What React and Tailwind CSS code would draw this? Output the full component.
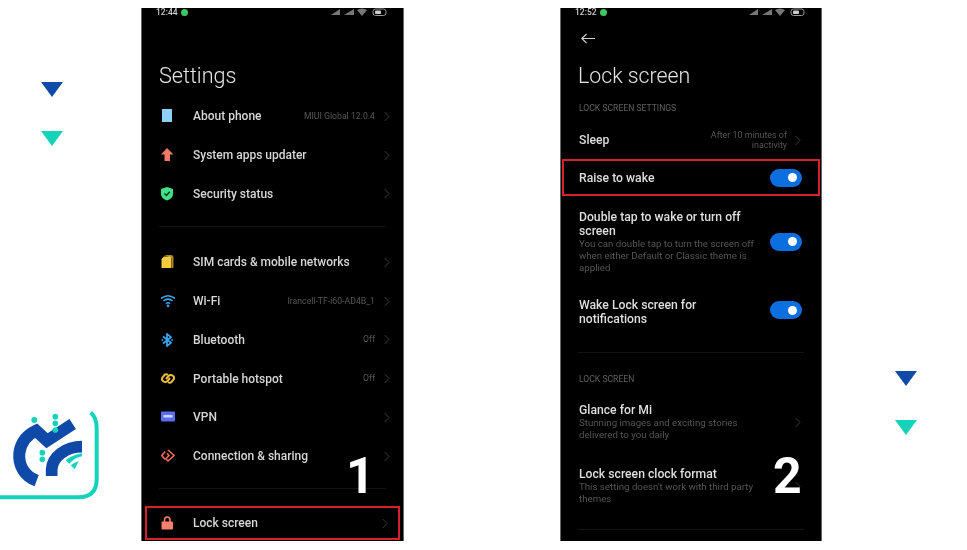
import React from "react";

const Tri = ({ color, className = "" }) => (
  <svg width="22" height="15" viewBox="0 0 22 15" className={`block ${className}`}>
    <polygon points="0,0 22,0 11,15" fill={color} />
  </svg>
);

const Chevron = ({ className = "" }) => (
  <svg width="6" height="11" viewBox="0 0 6 11" className={`shrink-0 ${className}`}>
    <path d="M0.7 1 L5 5.5 L0.7 10" fill="none" stroke="#3c3c3c" strokeWidth="1" />
  </svg>
);

const Logo = () => (
  <svg width="110" height="110" viewBox="0 0 330 330" className="block">
    <path d="M0 292 H235 Q290 292 290 238 V85 Q290 52 272 38" fill="none" stroke="#14d3bb" strokeWidth="12" />
    <path d="M110 242 C72 228 55 195 58 160 C62 125 85 102 108 92 L141 122 L218 72" fill="none" stroke="#0f4aa8" strokeWidth="36" />
    <path d="M155 228 L155 208 C157 170 198 140 246 140" fill="none" stroke="#0f4aa8" strokeWidth="35" />
    <g fill="#14d3bb">
      <circle cx="103" cy="60" r="9" />
      <circle cx="166" cy="50" r="8.5" />
      <circle cx="166" cy="70" r="8.5" />
      <circle cx="166" cy="90" r="8.5" />
      <circle cx="127" cy="158" r="8.5" />
      <circle cx="127" cy="178" r="8.5" />
      <path d="M197 181 C208 171 228 163 246 160 L246 169 C232 172 218 179 208 191 Z" />
      <path d="M212 196 C220 190 228 186 236 184 L224 208 Z" />
    </g>
  </svg>
);

const StatusBar = ({ time }) => (
  <div className="h-[9px] flex items-center justify-between pl-[14px] pr-[15px] text-[8.5px] leading-none font-medium text-[#cfcfcf]">
    <div className="flex items-center gap-[3px]">
      <span>{time}</span>
      <span className="w-[7px] h-[7px] rounded-full bg-[#43c463]" />
    </div>
    <svg width="58" height="9" viewBox="0 0 58 9">
      <polygon points="1,7 10,7 10,1" fill="#777" />
      <polygon points="14,7 24,7 24,1" fill="#777" />
      <path d="M27 2 Q32 -1 37 2 L32 8 Z" fill="#777" />
      <rect x="43" y="1" width="13" height="6.5" rx="2.5" fill="none" stroke="#999" strokeWidth="1" />
      <rect x="45" y="2.5" width="6" height="3.5" rx="1" fill="#ccc" />
    </svg>
  </div>
);

const icons = {
  phone: <rect x="1" y="0" width="10" height="13" fill="#8fd0f7" />,
  up: <path d="M6 0 L12.5 6.5 L9 6.5 L9 13 L3.5 13 L3.5 6.5 L0 6.5 Z" fill="#f57a66" />,
  shield: (
    <>
      <path d="M6 0 L12 2 L12 7 C12 10.5 9 12.5 6 13.5 C3 12.5 0 10.5 0 7 L0 2 Z" fill="#3fe08a" />
      <path d="M3.5 6.5 L5.5 8.5 L8.8 4.8" fill="none" stroke="#07361d" strokeWidth="1.5" />
    </>
  ),
  sim: (
    <>
      <path d="M3 0 L10 0 Q12.5 0 12.5 2.5 L12.5 12 Q12.5 13 11 13 L11 3 Z" fill="#a9852a" />
      <path d="M3 1.5 L9 1.5 Q10.5 1.5 10.5 3 L10.5 13 L1 13 Q0.5 13 0.5 12 L0.5 4 Z" fill="#f6cc3f" />
    </>
  ),
  wifi: (
    <g fill="none" stroke="#39a9ef" strokeWidth="1.5">
      <path d="M0 4.5 Q7 -1 14 4.5" />
      <path d="M2.4 7 Q7 3.2 11.6 7" />
      <path d="M4.8 9.5 Q7 7.8 9.2 9.5" />
      <circle cx="7" cy="11.8" r="0.6" fill="#39a9ef" />
    </g>
  ),
  bt: (
    <g>
      <path d="M2 3.5 L10 9.8 L6 13 L6 1 L10 4.2 L2 10.5" fill="none" stroke="#39a9ef" strokeWidth="1.7" />
      <circle cx="1.4" cy="7" r="0.9" fill="#39a9ef" />
      <circle cx="11" cy="7" r="0.9" fill="#39a9ef" />
    </g>
  ),
  link: (
    <g fill="none" stroke="#ecbe3c" strokeWidth="2">
      <path d="M7 3 Q5 1.5 3.5 3 L1.8 5 Q0 7.5 2.2 9.3 Q4.3 11 6.5 9 L9 6" />
      <path d="M7 10 Q9 11.5 10.5 10 L12.2 8 Q14 5.5 11.8 3.7 Q9.7 2 7.5 4 L5 7" />
    </g>
  ),
  vpn: (
    <>
      <rect x="0" y="1.5" width="14" height="10" rx="1" fill="#5b6df2" />
      <rect x="2.5" y="5" width="9" height="2.5" fill="#cfd5ff" />
    </>
  ),
  conn: (
    <g fill="none" stroke="#ee6a58" strokeWidth="1.6">
      <path d="M4.2 2.5 L0.8 6.5 L4.2 10.5" />
      <path d="M7 1 L13 6.5 L7 12 L4.8 9.8 L8 6.5 L6 4.2" />
    </g>
  ),
  lock: (
    <>
      <path d="M3.5 6 L3.5 4 Q3.5 1 6.2 1 Q9 1 9 4 L9 6" fill="none" stroke="#f5806c" strokeWidth="1.6" />
      <rect x="0.5" y="5.5" width="11.5" height="8" rx="1" fill="#f5806c" />
    </>
  ),
};

const Row = ({ icon, label, value, framed }) => (
  <div className={`flex items-center ${framed ? "h-[30px] pl-[14px] pr-[10px] pt-[1px]" : "h-[38.8px] pl-[19px] pr-[13px]"}`}>
    <svg width="14" height="14" viewBox="0 0 14 14" className="shrink-0">
      {icons[icon]}
    </svg>
    <span className="ml-[18px] text-[12px] font-medium text-[#d6d6d6] whitespace-nowrap">{label}</span>
    <span className="ml-auto text-[8.7px] text-[#565656] whitespace-nowrap">{value}</span>
    <Chevron className="ml-[9px]" />
  </div>
);

const Toggle = () => (
  <div className="w-[32px] h-[18px] rounded-full bg-[#0b6fe0] flex items-center justify-end pr-[5px] shrink-0">
    <span className="w-[9px] h-[9px] rounded-full bg-white" />
  </div>
);

const Title = ({ children }) => (
  <div className="text-[12.2px] leading-[14px] font-medium text-[#dedede]">{children}</div>
);
const Desc = ({ children }) => (
  <div className="text-[9.7px] leading-[12px] text-[#565656]">{children}</div>
);
const Caps = ({ children }) => (
  <div className="text-[8.6px] leading-[10px] text-[#606060] ml-[18px]">{children}</div>
);

const Phone1 = () => (
  <div className="relative w-[263px] h-[533px] mt-[8px] bg-black shrink-0 border-x border-[#666] blur-[0.45px]">
    <StatusBar time="12:44" />
    <h1 className="mt-[44px] h-[30px] leading-[30px] pl-[17px] text-[21.6px] font-light text-[#e4e4e4]">Settings</h1>
    <div className="mt-[6px]">
      <Row icon="phone" label="About phone" value="MIUI Global 12.0.4" />
      <Row icon="up" label="System apps updater" />
      <Row icon="shield" label="Security status" />
    </div>
    <div className="mt-[13px] mx-[17px] h-px bg-[#141414]" />
    <div className="mt-[15.5px]">
      <Row icon="sim" label="SIM cards & mobile networks" />
      <Row icon="wifi" label="Wi-Fi" value="Irancell-TF-i60-AD4B_1" />
      <Row icon="bt" label="Bluetooth" value="Off" />
      <Row icon="link" label="Portable hotspot" value="Off" />
      <Row icon="vpn" label="VPN" />
      <Row icon="conn" label="Connection & sharing" />
    </div>
    <div className="mt-[12px] mx-[17px] h-px bg-[#141414]" />
    <div className="mt-[17px] mx-[3px] border-2 border-[#d5202e]">
      <Row icon="lock" label="Lock screen" framed />
    </div>
    <div className="absolute left-[204px] top-[443px] text-[50px] leading-[50px] font-bold text-white">1</div>
  </div>
);

const Phone2 = () => (
  <div className="relative w-[262px] h-[533px] mt-[8px] bg-black shrink-0 border-x border-[#666] blur-[0.45px]">
    <StatusBar time="12:52" />
    <svg width="16" height="11" viewBox="0 0 16 11" className="mt-[16px] ml-[19px] block">
      <path d="M15 5.5 H2 M6.5 1 L1.8 5.5 L6.5 10" fill="none" stroke="#d0d0d0" strokeWidth="1.1" />
    </svg>
    <h1 className="mt-[17px] h-[30px] leading-[30px] pl-[17px] text-[21.3px] font-light text-[#e4e4e4]">Lock screen</h1>
    <div className="mt-[12px]">
      <Caps>LOCK SCREEN SETTINGS</Caps>
    </div>
    <div className="mt-[8px] h-[38px] flex items-center pl-[18px] pr-[20px]">
      <Title>Sleep</Title>
      <div className="ml-auto text-right text-[8.9px] leading-[10.5px] text-[#565656]">
        After 10 minutes of
        <br />
        inactivity
      </div>
      <Chevron className="ml-[8px]" />
    </div>
    <div className="mx-[1px] h-[37px] border-2 border-[#d5202e] flex items-center pl-[15px] pr-[16px]">
      <Title>Raise to wake</Title>
      <div className="ml-auto">
        <Toggle />
      </div>
    </div>
    <div className="mt-[14px] flex items-center pl-[18px] pr-[19px]">
      <div className="w-[186px]">
        <Title>Double tap to wake or turn off screen</Title>
        <Desc>You can double tap to turn the screen off when either Default or Classic theme is applied</Desc>
      </div>
      <div className="ml-auto -mt-[1px]">
        <Toggle />
      </div>
    </div>
    <div className="mt-[24px] flex items-center pl-[18px] pr-[19px]">
      <div className="w-[186px]">
        <Title>Wake Lock screen for notifications</Title>
      </div>
      <div className="ml-auto -mt-[4px]">
        <Toggle />
      </div>
    </div>
    <div className="mt-[26px] mx-[17px] h-px bg-[#141414]" />
    <div className="mt-[21px]">
      <Caps>LOCK SCREEN</Caps>
    </div>
    <div className="mt-[19px] flex items-center pl-[18px] pr-[20px]">
      <div className="w-[190px]">
        <Title>Glance for Mi</Title>
        <Desc>Stunning images and exciting stories delivered to you daily</Desc>
      </div>
      <Chevron className="ml-auto" />
    </div>
    <div className="mt-[26px] flex items-center pl-[18px] pr-[20px]">
      <div className="w-[190px]">
        <Title>Lock screen clock format</Title>
        <Desc>This setting doesn't work with third party themes</Desc>
      </div>
      <Chevron className="ml-auto" />
    </div>
    <div className="mt-[24px] mx-[17px] h-px bg-[#141414]" />
    <div className="absolute left-[212px] top-[443px] text-[50px] leading-[50px] font-bold text-white">2</div>
  </div>
);

export default function App() {
  return (
    <div className="w-[967px] h-[550px] bg-white flex overflow-hidden font-['Roboto',sans-serif]">
      <div className="w-[141px] shrink-0 flex flex-col">
        <Tri color="#0f4aa8" className="mt-[82px] ml-[41px]" />
        <Tri color="#14d3bb" className="mt-[34px] ml-[41px]" />
        <div className="mt-[254px]">
          <Logo />
        </div>
      </div>
      <Phone1 />
      <div className="w-[156px] shrink-0" />
      <Phone2 />
      <div className="flex-1 flex flex-col">
        <Tri color="#0f4aa8" className="mt-[371px] ml-[73px]" />
        <Tri color="#14d3bb" className="mt-[34px] ml-[73px]" />
      </div>
    </div>
  );
}
